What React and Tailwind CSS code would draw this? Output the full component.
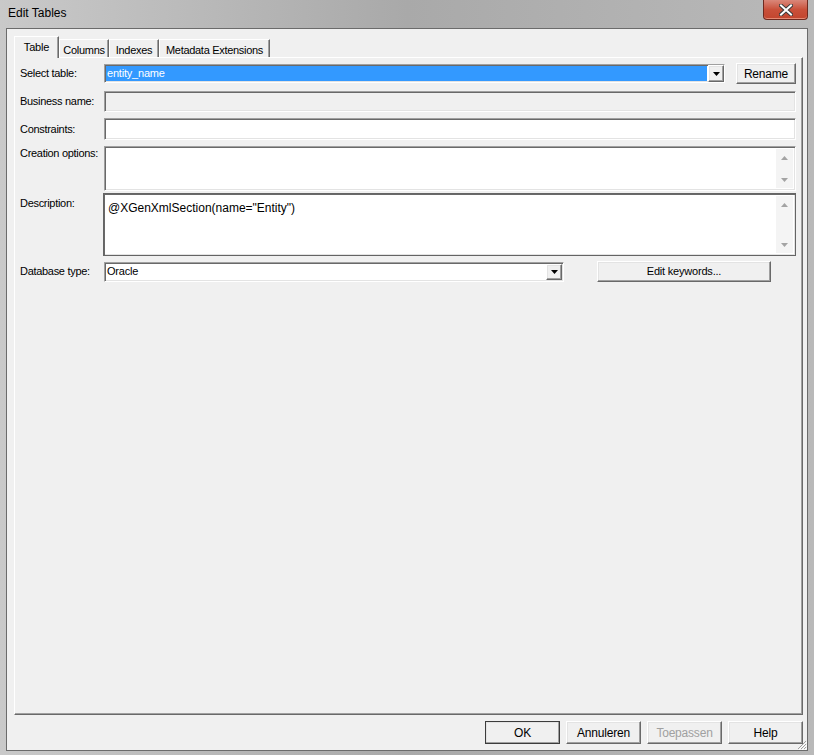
import React from 'react';

const raised =
  'border border-t-white border-l-white border-r-[#696969] border-b-[#696969] shadow-[inset_-1px_-1px_0_#a0a0a0,inset_1px_1px_0_#e3e3e3]';
const sunken =
  'border border-t-[#a0a0a0] border-l-[#a0a0a0] border-r-white border-b-white shadow-[inset_1px_1px_0_#696969,inset_-1px_-1px_0_#e3e3e3]';

const DropArrow = () => (
  <div className={`w-[16px] h-full flex items-center justify-center bg-[#f0f0f0] ${raised}`}>
    <svg width="7" height="4" viewBox="0 0 7 4">
      <path d="M0 0h7L3.5 4z" fill="#000" />
    </svg>
  </div>
);

const ScrollBar = () => (
  <div className="w-[17px] h-full flex flex-col justify-between bg-[#f4f4f4]">
    <div className="h-[17px] flex items-center justify-center">
      <svg width="7" height="4" viewBox="0 0 7 4">
        <path d="M3.5 0L7 4H0z" fill="#a3a3a3" />
      </svg>
    </div>
    <div className="h-[17px] flex items-center justify-center">
      <svg width="7" height="4" viewBox="0 0 7 4">
        <path d="M0 0h7L3.5 4z" fill="#a3a3a3" />
      </svg>
    </div>
  </div>
);

const Label = ({ children, className = '' }) => (
  <div className={`w-[84px] shrink-0 text-[11px] leading-[13px] tracking-[-0.3px] text-black ${className}`}>
    {children}
  </div>
);

const Button = ({ children, className = '', disabled }) => (
  <div
    className={`flex items-center justify-center bg-[#f0f0f0] text-[11px] tracking-[-0.2px] ${
      disabled ? 'text-[#a0a0a0]' : 'text-black'
    } ${raised} ${className}`}
  >
    {children}
  </div>
);

export default function App() {
  const tabs = ['Columns', 'Indexes', 'Metadata Extensions'];
  const tabW = ['w-[50px]', 'w-[50px]', 'w-[111px]'];

  return (
    <div className="w-[814px] h-[755px] flex flex-col font-['Liberation_Sans',Arial,sans-serif] bg-gradient-to-r from-[#c9c9c9] via-[#a9a9a9] to-[#b9b9b9]">
      {/* title bar */}
      <div className="h-[28px] flex items-start shrink-0">
        <div className="pl-[8px] pt-[6px] text-[12px] leading-[14px] text-black">Edit Tables</div>
        <div className="flex-1" />
        <div className="mr-[6px] w-[45px] h-[20px] flex items-center justify-center rounded-b-[4px] border border-t-0 border-[#6e2a20] bg-gradient-to-b from-[#d9877a] via-[#c9503a] to-[#c2452e] shadow-[inset_0_-1px_0_#e58a74]">
          <svg width="14" height="12" viewBox="0 0 14 12">
            <path
              d="M2 1.5L12 10.5M12 1.5L2 10.5"
              stroke="#3b3b3b"
              strokeWidth="4"
              strokeLinecap="square"
            />
            <path
              d="M2 1.5L12 10.5M12 1.5L2 10.5"
              stroke="#ffffff"
              strokeWidth="2"
              strokeLinecap="square"
            />
          </svg>
        </div>
      </div>

      {/* client area */}
      <div className="flex-1 flex pl-[6px] pr-[7px] pb-[4px]">
        <div className="relative flex-1 flex flex-col border border-[#6b6b6b] bg-[#f0f0f0] pt-[7px] pl-[7px] pr-[4px]">
          {/* tab strip */}
          <div className="h-[21px] flex items-end shrink-0">
            <div className="relative z-10 w-[45px] h-[22px] -mb-[1px] flex items-start justify-center pt-[2px] bg-[#f0f0f0] border border-b-0 border-t-white border-l-white border-r-[#696969] shadow-[inset_-1px_0_0_#a0a0a0] text-[11px] tracking-[-0.2px]">
              Table
            </div>
            {tabs.map((t, i) => (
              <div
                key={t}
                className={`${tabW[i]} h-[18px] flex items-start justify-center pt-[2px] bg-[#f0f0f0] border border-b-0 border-t-white border-l-white border-r-[#696969] shadow-[inset_-1px_0_0_#a0a0a0] text-[11px] tracking-[-0.3px]`}
              >
                {t}
              </div>
            ))}
          </div>

          {/* tab panel */}
          <div className="flex-1 flex flex-col pl-[5px] pr-[6px] pt-[5px] bg-[#f0f0f0] border border-t-white border-l-white border-r-[#696969] border-b-[#696969] shadow-[inset_-1px_-1px_0_#a0a0a0]">
            {/* Select table */}
            <div className="h-[21px] flex items-center">
              <Label>Select table:</Label>
              <div className={`w-[621px] h-[19px] flex bg-white ${sunken}`}>
                <div className="flex-1 m-[1px] flex items-center pl-[1px] bg-[#3399ff] text-white text-[11px] tracking-[-0.2px]">
                  entity_name
                </div>
                <DropArrow />
              </div>
              <Button className="ml-[11px] w-[60px] h-[21px] text-[12px]">Rename</Button>
            </div>

            {/* Business name */}
            <div className="mt-[7px] h-[21px] flex items-center">
              <Label>Business name:</Label>
              <div className={`flex-1 h-[21px] bg-[#f0f0f0] ${sunken}`} />
            </div>

            {/* Constraints */}
            <div className="mt-[6px] h-[22px] flex items-center">
              <Label>Constraints:</Label>
              <div className={`flex-1 h-[22px] bg-white ${sunken}`} />
            </div>

            {/* Creation options */}
            <div className="mt-[6px] h-[45px] flex items-start">
              <Label className="pt-[1px]">Creation options:</Label>
              <div className={`flex-1 h-[45px] flex justify-end bg-white p-[2px] ${sunken}`}>
                <ScrollBar />
              </div>
            </div>

            {/* Description */}
            <div className="mt-[2px] h-[63px] flex items-start">
              <Label className="pt-[4px]">Description:</Label>
              <div className="flex-1 -ml-[1px] h-[63px] flex bg-white p-[2px] border border-[#646464] shadow-[inset_1px_1px_0_#696969,inset_-1px_-1px_0_#e3e3e3]">
                <div className="flex-1 pl-[2px] pt-[5px] text-[12px] leading-[14px] text-black">
                  @XGenXmlSection(name="Entity")
                </div>
                <ScrollBar />
              </div>
            </div>

            {/* Database type */}
            <div className="mt-[5px] h-[21px] flex items-center">
              <Label>Database type:</Label>
              <div className={`w-[460px] h-[20px] flex bg-white ${sunken}`}>
                <div className="flex-1 flex items-center pl-[2px] text-[11px] tracking-[-0.2px] text-black">
                  Oracle
                </div>
                <div className="p-[1px] h-full">
                  <DropArrow />
                </div>
              </div>
              <Button className="ml-[33px] w-[174px] h-[21px]">Edit keywords...</Button>
            </div>
          </div>

          {/* bottom buttons */}
          <div className="mt-[6px] mb-[6px] h-[23px] flex justify-end gap-[6px] shrink-0">
            <Button className="w-[75px] h-[23px] outline outline-1 outline-[#3c3c3c] -outline-offset-1 text-[12px]">
              OK
            </Button>
            <Button className="w-[75px] h-[23px] text-[12px]">Annuleren</Button>
            <Button className="w-[75px] h-[23px] text-[12px]" disabled>
              Toepassen
            </Button>
            <Button className="w-[75px] h-[23px] text-[12px]">Help</Button>
          </div>

          {/* resize grip */}
          <svg className="absolute right-0 bottom-0" width="11" height="11" viewBox="0 0 11 11">
            <path d="M10 2L2 10M10 5L5 10M10 8L8 10" stroke="#a0a0a0" strokeWidth="1" />
            <path d="M11 3L3 11M11 6L6 11M11 9L9 11" stroke="#ffffff" strokeWidth="1" />
          </svg>
        </div>
      </div>
    </div>
  );
}
